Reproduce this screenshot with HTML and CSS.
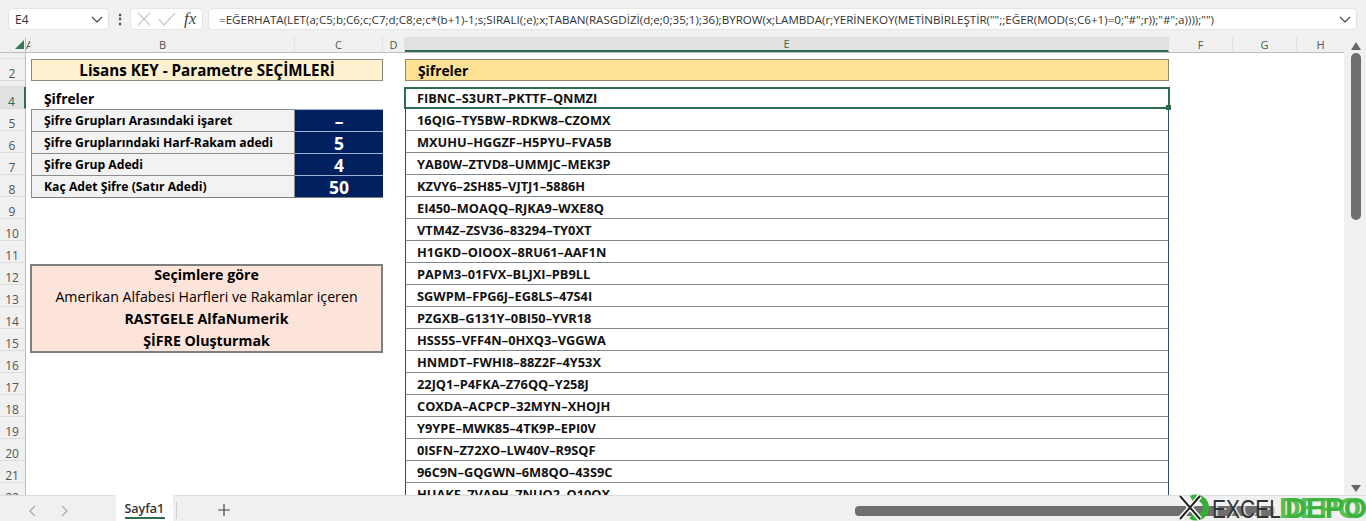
FILE: index.html
```html
<!DOCTYPE html>
<html lang="tr">
<head>
<meta charset="utf-8">
<title>Lisans KEY</title>
<link rel="stylesheet" href="styles.css">
</head>
<body>
<div class="app">
  <div class="formula-bar">
    <div class="namebox"><span>E4</span>
      <svg class="chev" width="12" height="7" viewBox="0 0 12 7"><path d="M1 1l5 5 5-5" fill="none" stroke="#444" stroke-width="1.2"/></svg>
    </div>
    <div class="dots">⋮</div>
    <div class="fx-box">
      <svg width="16" height="14" viewBox="0 0 16 14"><path d="M2 1l12 12M14 1L2 13" stroke="#c8c8c8" stroke-width="1.2" fill="none"/></svg>
      <svg width="18" height="14" viewBox="0 0 18 14"><path d="M1 7l5 6L17 1" stroke="#c8c8c8" stroke-width="1.2" fill="none"/></svg>
      <span class="fx">fx</span>
    </div>
    <div class="formula"><span>=EĞERHATA(LET(a;C5;b;C6;c;C7;d;C8;e;c*(b+1)-1;s;SIRALI(;e);x;TABAN(RASGDİZİ(d;e;0;35;1);36);BYROW(x;LAMBDA(r;YERİNEKOY(METİNBİRLEŞTİR("";;EĞER(MOD(s;C6+1)=0;"#";r));"#";a))));"")</span>
      <svg class="chev" width="12" height="7" viewBox="0 0 12 7"><path d="M1 1l5 5 5-5" fill="none" stroke="#444" stroke-width="1.2"/></svg>
    </div>
  </div>

  <div class="sheet">
    <div class="row-heads">
      <div class="corner"><i class="tri"></i></div>
      <div class="rh rh-thin"></div>
      <div class="rh">2</div>
      <div class="rh rh-thin"></div>
      <div class="rh rh-sel">4</div>
      <div class="rh">5</div><div class="rh">6</div><div class="rh">7</div><div class="rh">8</div>
      <div class="rh">9</div><div class="rh">10</div><div class="rh">11</div><div class="rh">12</div>
      <div class="rh">13</div><div class="rh">14</div><div class="rh">15</div><div class="rh">16</div>
      <div class="rh">17</div><div class="rh">18</div><div class="rh">19</div><div class="rh">20</div>
      <div class="rh">21</div><div class="rh">22</div>
    </div>

    <div class="grid-area">
      <div class="col-heads">
        <div class="ch ch-a">A</div>
        <div class="ch ch-b">B</div>
        <div class="ch ch-c">C</div>
        <div class="ch ch-d">D</div>
        <div class="ch ch-e">E</div>
        <div class="ch ch-f">F</div>
        <div class="ch ch-g">G</div>
        <div class="ch ch-h">H</div>
      </div>
      <div class="cells">
        <div class="left">
          <div class="title">Lisans KEY - Parametre SEÇİMLERİ</div>
          <div class="sub">Şifreler</div>
          <div class="params">
            <div class="param"><div class="label">Şifre Grupları Arasındaki işaret</div><div class="val">–</div></div>
            <div class="param"><div class="label">Şifre Gruplarındaki Harf-Rakam adedi</div><div class="val">5</div></div>
            <div class="param"><div class="label">Şifre Grup Adedi</div><div class="val">4</div></div>
            <div class="param"><div class="label">Kaç Adet Şifre (Satır Adedi)</div><div class="val">50</div></div>
          </div>
          <div class="note">
            <div class="b">Seçimlere göre</div>
            <div>Amerikan Alfabesi Harfleri ve Rakamlar içeren</div>
            <div class="b">RASTGELE AlfaNumerik</div>
            <div class="b">ŞİFRE Oluşturmak</div>
          </div>
        </div>
        <div class="codes">
          <div class="codes-head">Şifreler</div>
          <div class="code code-sel">FIBNC–S3URT–PKTTF–QNMZI<i class="handle"></i></div>
          <div class="code">16QIG–TY5BW–RDKW8–CZOMX</div>
          <div class="code">MXUHU–HGGZF–H5PYU–FVA5B</div>
          <div class="code">YAB0W–ZTVD8–UMMJC–MEK3P</div>
          <div class="code">KZVY6–2SH85–VJTJ1–5886H</div>
          <div class="code">EI450–MOAQQ–RJKA9–WXE8Q</div>
          <div class="code">VTM4Z–ZSV36–83294–TY0XT</div>
          <div class="code">H1GKD–OIOOX–8RU61–AAF1N</div>
          <div class="code">PAPM3–01FVX–BLJXI–PB9LL</div>
          <div class="code">SGWPM–FPG6J–EG8LS–47S4I</div>
          <div class="code">PZGXB–G131Y–0BI50–YVR18</div>
          <div class="code">HSS5S–VFF4N–0HXQ3–VGGWA</div>
          <div class="code">HNMDT–FWHI8–88Z2F–4Y53X</div>
          <div class="code">22JQ1–P4FKA–Z76QQ–Y258J</div>
          <div class="code">COXDA–ACPCP–32MYN–XHOJH</div>
          <div class="code">Y9YPE–MWK85–4TK9P–EPI0V</div>
          <div class="code">0ISFN–Z72XO–LW40V–R9SQF</div>
          <div class="code">96C9N–GQGWN–6M8QO–43S9C</div>
          <div class="code">HUAKF–7VA9H–7NUQ2–Q10QX</div>
        </div>
      </div>
    </div>

    <div class="vscroll">
      <svg width="10" height="8" viewBox="0 0 10 8"><path d="M5 0l5 8H0z" fill="#666"/></svg>
      <div class="vthumb"></div>
      <svg class="down" width="10" height="7" viewBox="0 0 10 7"><path d="M5 7L10 0H0z" fill="#666"/></svg>
    </div>
  </div>

  <div class="tabs">
    <div class="tab-nav">
      <svg width="8" height="12" viewBox="0 0 8 12"><path d="M7 1L2 6l5 5" fill="none" stroke="#aaa" stroke-width="1.2"/></svg>
      <svg width="8" height="12" viewBox="0 0 8 12"><path d="M1 1l5 5-5 5" fill="none" stroke="#aaa" stroke-width="1.2"/></svg>
    </div>
    <div class="tab"><span>Sayfa1</span></div>
    <div class="tab-rest">
      <i class="tab-sep"></i>
      <svg class="plus" width="12" height="12" viewBox="0 0 12 12"><path d="M6 0v12M0 6h12" stroke="#444" stroke-width="1.2"/></svg>
      <div class="hscroll"><div class="hthumb"></div></div>
    </div>
  </div>

  <div class="mark">
    <svg class="mark-ring" width="30" height="27" viewBox="0 0 30 27"><circle cx="16" cy="13.5" r="10" fill="none" stroke="#35b035" stroke-width="6" stroke-dasharray="42 21" stroke-dashoffset="21"/></svg>
    <svg class="mark-x" width="26" height="27" viewBox="0 0 26 27"><path d="M3 2l20 23M23 2L3 25" fill="none" stroke="#fff" stroke-width="5"/><path d="M3 2l20 23M23 2L3 25" fill="none" stroke="#222" stroke-width="2"/></svg>
    <span class="mark-excel">EXCEL</span><span class="mark-depo">DEPO</span>
  </div>
</div>
</body>
</html>
```
FILE: styles.css
```css
* { box-sizing: border-box; }
html, body { margin: 0; height: 100%; overflow: hidden; }
body { font-family: "Open Sans", "Noto Sans", sans-serif; color: #000; background: #fff; }

.app { position: relative; width: 1366px; height: 521px; overflow: hidden; display: flex; flex-direction: column; background: #f0f0f0; }

/* formula bar */
.formula-bar { height: 37px; flex: none; display: flex; align-items: flex-start; padding-top: 8px; padding-left: 8px; background: #f1f1f1; font-size: 12px; color: #333; }
.namebox { width: 101px; height: 22px; background: #fff; border: 1px solid #e4e4e4; border-radius: 4px; display: flex; align-items: center; justify-content: space-between; padding: 0 5px 0 6px; }
.dots { width: 21px; text-align: center; font-size: 14px; font-weight: 700; line-height: 22px; color: #444; }
.fx-box { width: 73px; height: 22px; background: #fff; border: 1px solid #e4e4e4; border-radius: 4px; display: flex; align-items: center; gap: 6px; padding-left: 5px; }
.fx { font-family: "Liberation Serif", serif; font-style: italic; font-size: 17px; color: #444; margin-left: 2px; line-height: 20px; }
.formula { width: 1149px; height: 22px; margin-left: 5px; background: #fff; border: 1px solid #e4e4e4; border-radius: 4px; display: flex; align-items: center; justify-content: space-between; padding: 0 5px 0 10px; font-size: 11.6px; white-space: nowrap; }

/* sheet */
.sheet { height: 458px; flex: none; display: flex; overflow: hidden; background: #fff; }
.row-heads { width: 26px; flex: none; display: flex; flex-direction: column; background: #f0f0f0; border-right: 1px solid #bdbdbd; }
.corner { height: 16px; flex: none; position: relative; border-bottom: 1px solid #bdbdbd; }
.tri { position: absolute; right: 1px; bottom: 3px; width: 0; height: 0; border-left: 9px solid transparent; border-bottom: 9px solid #2f7d5b; }
.rh { height: 22px; flex: none; display: flex; align-items: center; justify-content: center; font-size: 12px; color: #555; border-bottom: 1px solid #dcdcdc; padding: 7px 1px 0 0; }
.rh-thin { height: 6px; padding: 0; }
.rh-sel { background: #e1e1e1; color: #2b6d4d; border-right: 2px solid #2f6b4f; margin-right: -1px; }

.grid-area { flex: none; width: 1318px; display: flex; flex-direction: column; }
.col-heads { height: 16px; flex: none; display: flex; background: #f0f0f0; border-bottom: 1px solid #bdbdbd; }
.ch { display: flex; align-items: center; justify-content: center; font-size: 11px; color: #555; border-right: 1px solid #e2e2e2; }
.ch-a { width: 5px; justify-content: flex-start; overflow: hidden; }
.ch-b { width: 264px; }
.ch-c { width: 88px; }
.ch-d { width: 22px; }
.ch-e { width: 764px; background: #e1e1e1; color: #2b6d4d; border-bottom: 2px solid #2f6b4f; }
.ch-f { width: 64px; }
.ch-g { width: 64px; }
.ch-h { width: 47px; border-right: 0; }

.cells { display: flex; flex: 1; padding-top: 6px; min-height: 0; overflow: hidden; background: #fff; }
.left { width: 352px; margin-left: 5px; flex: none; font-size: 12.2px; font-weight: 700; }
.title { height: 22px; background: #fdf1d0; border: 1px solid #8a8a7a; display: flex; align-items: center; justify-content: center; font-size: 15.2px; white-space: nowrap; }
.sub { height: 22px; margin-top: 6px; padding-left: 13px; display: flex; align-items: center; font-size: 13.8px; }
.params { border-bottom: 1px solid #7f7f7f; }
.param { height: 22px; display: flex; }
.label { width: 264px; background: #f2f2f2; border: 1px solid #8c8c8c; border-bottom: 0; padding-left: 12px; display: flex; align-items: center; }
.val { width: 88px; background: #002060; color: #fff; border-top: 1px solid #9db4d0; display: flex; align-items: center; justify-content: center; font-size: 17.5px; }
.note { margin: 66px 0 0 -1px; width: 353px; height: 89px; background: #fde4da; border: 2px solid #7f7f7f; display: flex; flex-direction: column; align-items: center; font-size: 14.2px; font-weight: 400; white-space: nowrap; }
.note > div { height: 22px; line-height: 21px; flex: none; }
.note .b { font-weight: 700; }
.note > div:first-child { margin-top: -2px; }

.codes { width: 764px; margin-left: 22px; flex: none; }
.codes-head { height: 22px; margin-bottom: 6px; background: #fde295; border: 1px solid #8a8a6a; padding-left: 12px; display: flex; align-items: center; font-size: 13.8px; font-weight: 700; }
.code { height: 22px; background: #fff; border-left: 1px solid #2a4a78; border-right: 1px solid #2a4a78; border-bottom: 1px solid #7f8790; padding: 1px 0 0 11px; display: flex; align-items: center; font-size: 12.8px; font-weight: 700; color: #111; flex: none; }
.code-sel { position: relative; border: 2px solid #2f6b4f; padding: 0 0 0 11px; margin-left: -1px; width: 766px; }
.handle { position: absolute; right: -3px; bottom: -3px; width: 5px; height: 5px; background: #2f6b4f; border: 0; }

.vscroll { width: 22px; flex: none; background: #f0f0f0; display: flex; flex-direction: column; align-items: center; padding: 5px 0 0 2px; }
.vthumb { width: 10px; height: 167px; margin-top: 3px; background: #6f6f6f; border-radius: 5px; }
.down { margin-top: auto; margin-bottom: 3px; }

/* tabs */
.tabs { height: 26px; flex: none; display: flex; background: #f0f0f0; }
.tab-nav { width: 116px; display: flex; gap: 25px; padding: 9px 0 0 28px; background: #f0f0f0; border-top: 1px solid #dcdcdc; border-top-right-radius: 4px; }
.tab { width: 57px; background: #fff; display: flex; justify-content: center; padding-top: 5px; }
.tab span { height: 19px; font-size: 12.5px; font-weight: 600; color: #333; border-bottom: 2px solid #2f6b4f; width: 40px; white-space: nowrap; line-height: 17px; }
.tab-rest { flex: 1; display: flex; align-items: flex-start; border-top: 1px solid #dcdcdc; border-top-left-radius: 4px; padding: 8px 0 0 3px; }
.tab-sep { width: 1px; height: 17px; margin-top: -2px; background: #d0d0d0; }
.plus { margin-left: 41px; }
.hscroll { margin-left: 625px; flex: 1; }
.hthumb { margin-top: 2px; width: 420px; height: 10px; background: #6f6f6f; border-radius: 4px; }

/* watermark */
.mark { position: absolute; left: 1177px; top: 494px; height: 27px; width: 189px; overflow: hidden; white-space: nowrap; }
.mark-x { position: absolute; left: 0; top: 0; }
.mark-ring { position: absolute; left: 3px; top: 0; }
.mark-excel { position: absolute; left: 35px; top: 3px; font-family: "Liberation Sans", sans-serif; font-size: 21px; line-height: 20px; color: #333; transform: scaleY(1.25); transform-origin: top left; text-shadow: 2px 0 rgba(255,255,255,.7); }
.mark-depo { position: absolute; left: 108px; top: 1px; font-family: "Liberation Sans", sans-serif; font-size: 30px; font-weight: 700; line-height: 26px; letter-spacing: -1px; color: #3db33d; text-shadow: -6px 0 rgba(61,179,61,.85); }
```
